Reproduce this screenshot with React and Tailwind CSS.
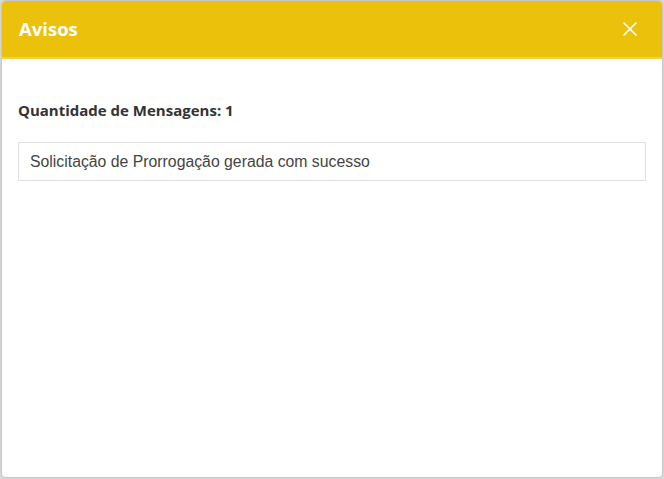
import React from "react";

export default function App() {
  return (
    <div className="w-[664px] h-[479px] bg-[#dcdcdc] pt-px pl-[2px] pr-[2px] pb-[2px]" style={{ fontFamily: '"Open Sans", sans-serif' }}>
      <div className="w-[660px] h-[476px] bg-white rounded-[4px] overflow-hidden flex flex-col shadow-[0_0_3px_rgba(0,0,0,0.25)]">
        <div className="h-[58px] bg-[#ebc10c] border-b-2 border-[#f2d04a] flex items-center justify-between pl-[17px] pr-[25px] shrink-0">
          <span className="text-white font-bold text-[18.5px]">Avisos</span>
          <svg width="14" height="14" viewBox="0 0 14 14" className="block">
            <path d="M1 1 L13 13 M13 1 L1 13" stroke="white" strokeWidth="1.6" strokeLinecap="round" />
          </svg>
        </div>
        <div className="px-4 pt-[41px]">
          <div className="text-[15px] font-bold text-[#333] leading-5">Quantidade de Mensagens: 1</div>
          <div className="mt-[22px] h-[39px] border border-[#e0e0e0] flex items-center px-[11px] text-[15.8px] text-[#444]" style={{ fontFamily: '"Liberation Sans", Arial, sans-serif' }}>
            Solicitação de Prorrogação gerada com sucesso
          </div>
        </div>
      </div>
    </div>
  );
}
